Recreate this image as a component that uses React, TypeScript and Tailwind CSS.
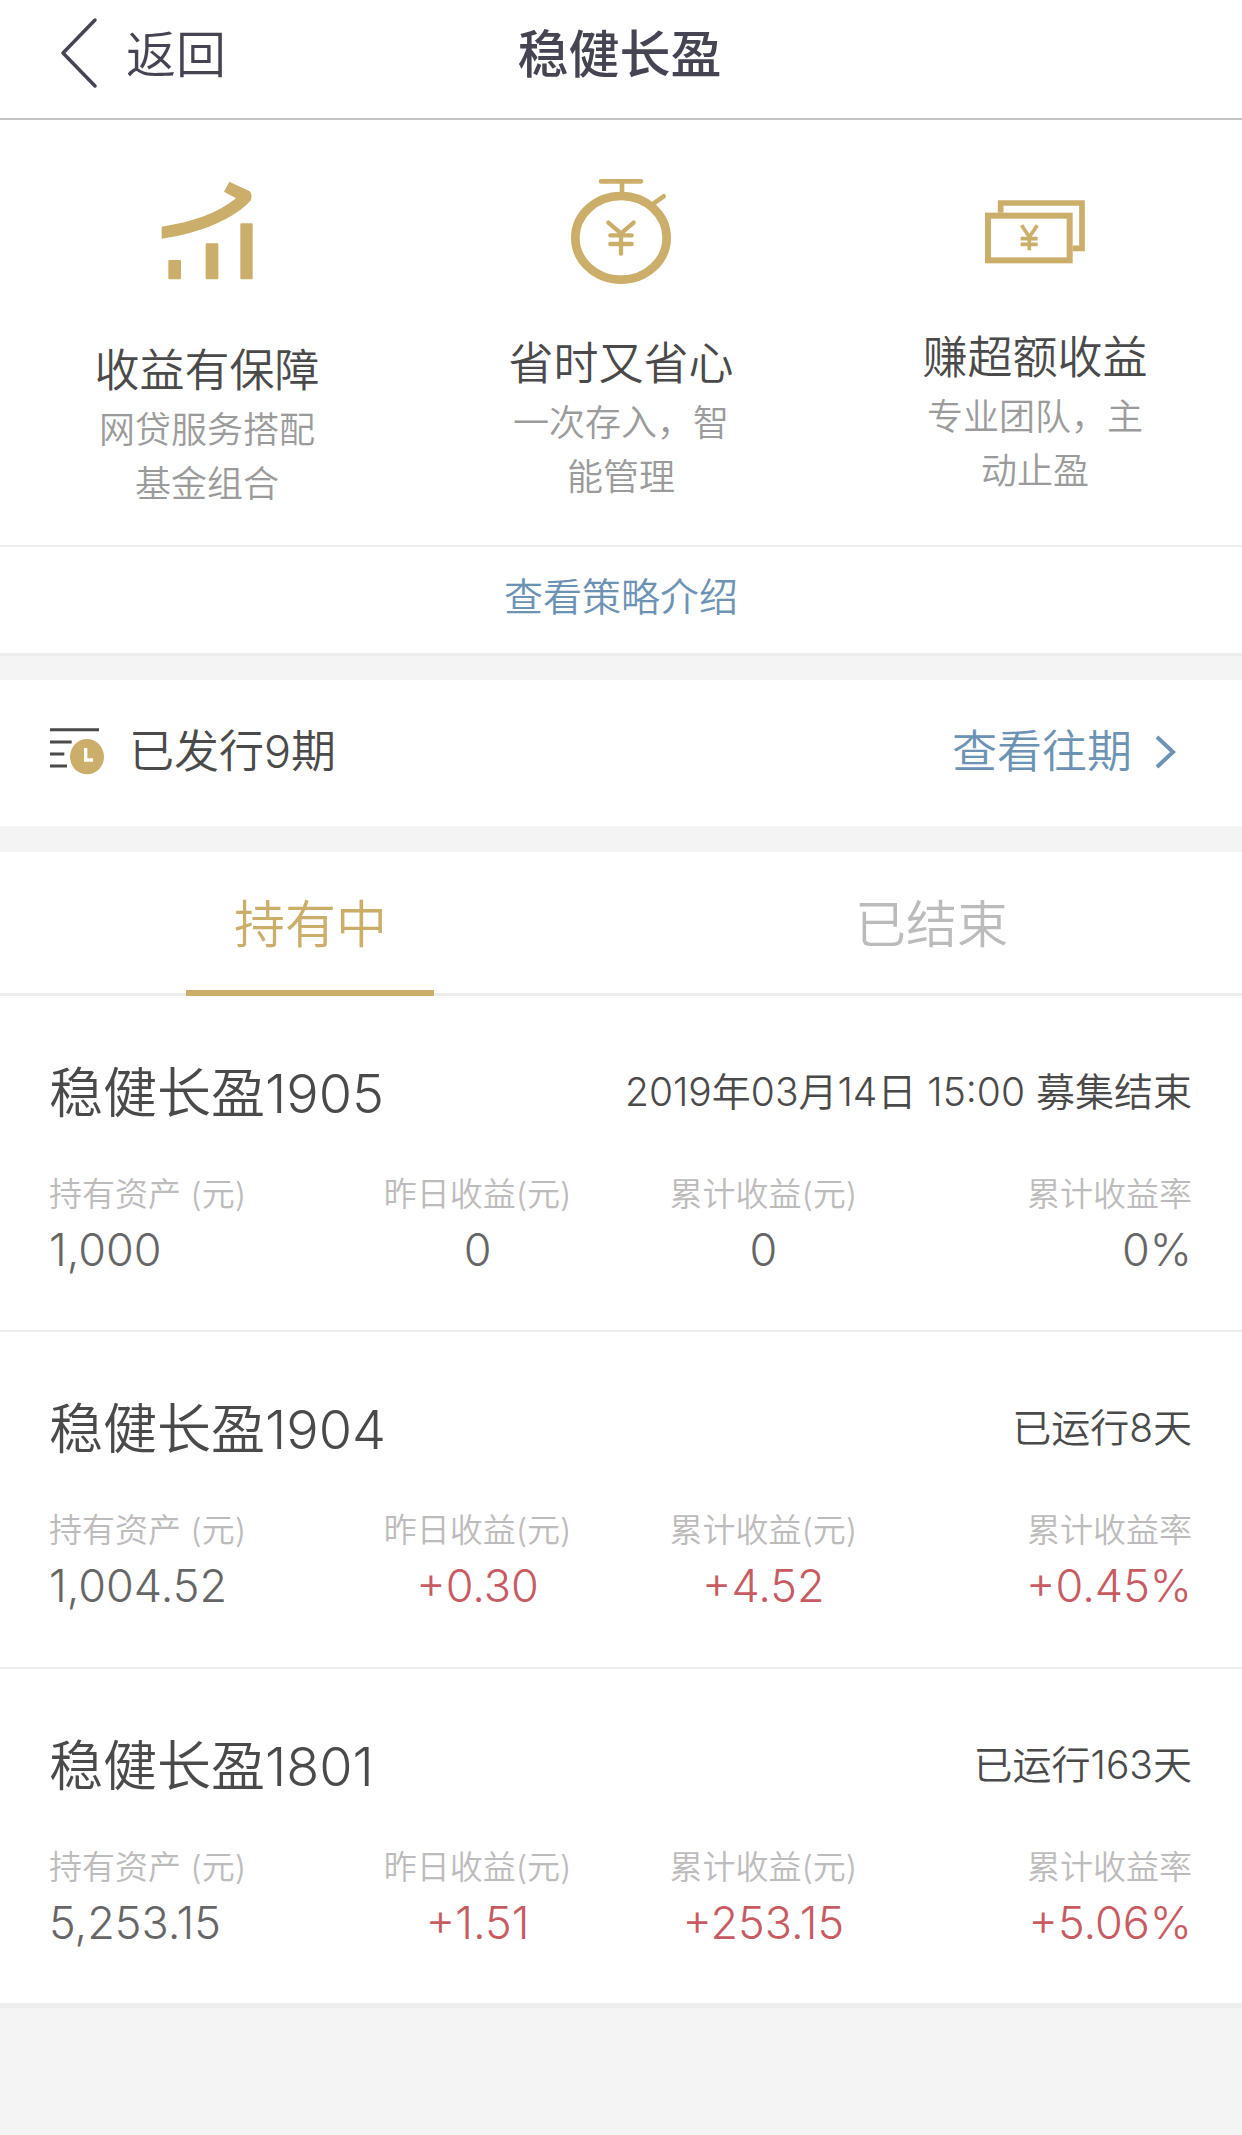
import { ReactNode } from 'react'

type Feature = { title: string; lines: string[]; icon: ReactNode }

type Holding = {
  name: string
  status: string
  amount: string
  yesterday: string
  total: string
  rate: string
}

const features: Feature[] = [
  { title: '收益有保障', lines: ['网贷服务搭配', '基金组合'], icon: <GrowthIcon /> },
  { title: '省时又省心', lines: ['一次存入，智', '能管理'], icon: <StopwatchIcon /> },
  { title: '赚超额收益', lines: ['专业团队，主', '动止盈'], icon: <CashIcon /> },
]

const holdings: Holding[] = [
  {
    name: '稳健长盈1905',
    status: '2019年03月14日 15:00 募集结束',
    amount: '1,000',
    yesterday: '0',
    total: '0',
    rate: '0%',
  },
  {
    name: '稳健长盈1904',
    status: '已运行8天',
    amount: '1,004.52',
    yesterday: '+0.30',
    total: '+4.52',
    rate: '+0.45%',
  },
  {
    name: '稳健长盈1801',
    status: '已运行163天',
    amount: '5,253.15',
    yesterday: '+1.51',
    total: '+253.15',
    rate: '+5.06%',
  },
]

function GrowthIcon() {
  return (
    <svg viewBox="0 0 300 330" className="mt-[55px] mb-[54px] h-[110px] w-[100px]" fill="#ccae6b">
      <path d="M14 155C110 141 185 112 237 70L201 50L217 20L277 48Q287 55 282 75C235 130 130 175 14 191Z" />
      <rect x="34" y="255" width="38" height="58" rx="3" />
      <rect x="146" y="205" width="38" height="108" rx="3" />
      <rect x="250" y="145" width="37" height="168" rx="3" />
    </svg>
  )
}

function StopwatchIcon() {
  return (
    <svg
      viewBox="0 0 300 330"
      className="mt-[55px] mb-[47px] h-[110px] w-[100px]"
      fill="none"
      stroke="#ccae6b"
      strokeWidth="14"
      strokeLinecap="round"
    >
      <path d="M90 19H210M153 19V60M244 88L278 64" />
      <ellipse cx="150" cy="188.5" rx="137" ry="125.5" strokeWidth="26" />
      <path d="M112 143L150 175L188 143M118 181H182M118 207H182M150 175V236" strokeWidth="13" />
    </svg>
  )
}

function CashIcon() {
  return (
    <svg viewBox="0 0 300 210" className="mt-[77px] mb-[59px] h-[70px] w-[100px]" fill="none" stroke="#ccae6b">
      <path d="M47 47V18H291V154H263" strokeWidth="17" />
      <rect x="9" y="56" width="245" height="134" strokeWidth="18" />
      <path d="M110 85L133 120L157 85M107 125H158M107 142H158M133 116V160" strokeWidth="11" />
    </svg>
  )
}

function IssueIcon() {
  return (
    <svg viewBox="0 0 168 150" className="mb-[2px] h-[50px] w-[56px]" fill="none" strokeWidth="9">
      <path d="M0 11H147M0 48H65M0 84H43M0 120H51" stroke="#4a4a4a" />
      <ellipse cx="111" cy="92" rx="51" ry="53" fill="#ccae6b" />
      <path d="M107 66V102H129" stroke="#fff" strokeWidth="10" />
    </svg>
  )
}

function Stat({ label, value, className }: { label: string; value: string; className: string }) {
  return (
    <div className={`w-1/4 whitespace-nowrap ${className}`}>
      <p className="text-[33px] leading-[46px] text-[#bdbbbb]">{label}</p>
      <p
        className={`mt-[3px] text-[45px] leading-[60px] ${
          value.startsWith('+') ? 'text-[#c75b62]' : 'text-[#666]'
        }`}
      >
        {value}
      </p>
    </div>
  )
}

function HoldingCard({ item }: { item: Holding }) {
  return (
    <li className="h-[336px] border-b-2 border-[#ededed] bg-white pt-[58px] pr-[50px] pl-[49px] nth-2:h-[337px] last:h-[339px] last:border-b-[5px]">
      <div className="flex h-[76px] items-center justify-between whitespace-nowrap text-[#4a4a4a]">
        <h2 className="pt-[3px] text-[54px]">{item.name}</h2>
        <span className="text-[39px]">{item.status}</span>
      </div>
      <div className="mt-[41px] flex">
        <Stat label="持有资产 (元)" value={item.amount} className="text-left" />
        <Stat label="昨日收益(元)" value={item.yesterday} className="text-center" />
        <Stat label="累计收益(元)" value={item.total} className="text-center" />
        <Stat label="累计收益率" value={item.rate} className="text-right" />
      </div>
    </li>
  )
}

export default function App() {
  return (
    <div className="min-h-[2135px] w-[1242px] bg-[#f4f4f4] font-['Inter','Noto_Sans_CJK_SC',sans-serif] font-[350]">
      {/* Header */}
      <header className="grid h-[120px] grid-cols-3 items-center border-b-2 border-[#c4c4c6] bg-white pb-[12px] text-[#454452]">
        <button className="flex items-center pl-[59px] text-[50px] leading-none">
          <svg viewBox="0 0 40 72" className="mr-[27px] h-[72px] w-[40px]" fill="none" stroke="currentColor">
            <path d="M36 3L4 36L36 69" strokeWidth="3.5" strokeLinecap="round" strokeLinejoin="round" />
          </svg>
          <span className="pt-[4px]">返回</span>
        </button>
        <h1 className="pt-[3px] pr-[3px] text-center text-[51px] leading-none font-medium">稳健长盈</h1>
      </header>

      {/* Highlights */}
      <section className="flex h-[427px] border-b-2 border-[#ededed] bg-white">
        {features.map((f) => (
          <div key={f.title} className="flex flex-1 flex-col items-center">
            {f.icon}
            <h3 className="mb-px text-[45px] leading-[63px] text-[#4a4a4a]">{f.title}</h3>
            {f.lines.map((line) => (
              <p key={line} className="text-[36px] leading-[54px] text-[#9b9b9b]">
                {line}
              </p>
            ))}
          </div>
        ))}
      </section>
      <a className="flex h-[109px] items-center justify-center border-b-[3px] border-[#ededed] bg-white pb-[5px] text-[39px] text-[#6d93b4]">
        查看策略介绍
      </a>

      {/* Past issues */}
      <section className="mt-[24px] flex h-[146px] items-center justify-between bg-white pr-[64px] pb-[2px] pl-[50px] text-[45px]">
        <div className="flex items-center text-[#4a4a4a]">
          <IssueIcon />
          <span className="ml-[23px]">已发行9期</span>
        </div>
        <a className="flex items-center text-[#6d93b4]">
          查看往期
          <svg viewBox="0 0 24 36" className="ml-[22px] h-[36px] w-[24px]" fill="none" stroke="currentColor">
            <path d="M3 3L19 18L3 33" strokeWidth="4" />
          </svg>
        </a>
      </section>

      {/* Tabs */}
      <nav className="mt-[26px] flex h-[144px] border-b-[3px] border-[#ededed] bg-white text-[51px]">
        <div className="flex h-[144px] flex-1 flex-col items-center text-[#ccae6b]">
          <span className="flex h-[138px] items-center pt-[9px]">持有中</span>
          <i className="mr-px h-[6px] w-[248px] bg-[#ccae6b]" />
        </div>
        <div className="flex h-[138px] flex-1 items-center justify-center pt-[9px] text-[#bbb]">已结束</div>
      </nav>

      <ul>
        {holdings.map((item) => (
          <HoldingCard key={item.name} item={item} />
        ))}
      </ul>
    </div>
  )
}
